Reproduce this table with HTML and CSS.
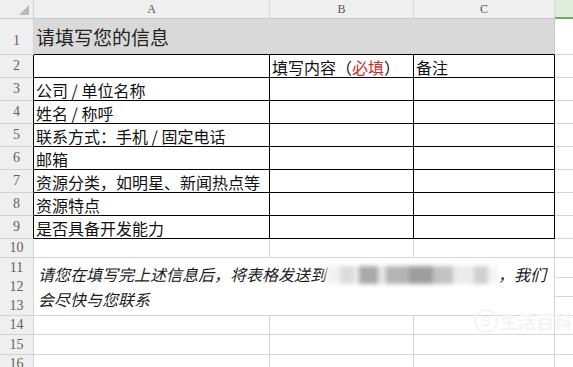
FILE: index.html
```html
<!DOCTYPE html>
<html lang="zh-CN">
<head>
<meta charset="utf-8">
<title>请填写您的信息</title>
<link rel="stylesheet" href="styles.css">
</head>
<body>
<div class="sheet">
  <div class="corner"><svg width="12" height="12" viewBox="0 0 12 12"><polygon points="1,11 11,11 11,1" fill="#b8b8b8"/></svg></div>
  <div class="colh">A</div>
  <div class="colh">B</div>
  <div class="colh">C</div>
  <div class="colh active"></div>

  <div class="rh rh1">1</div>
  <div class="title">请填写您的信息</div>
  <div class="d"></div>

  <div class="rh blk">2</div>
  <div class="c b"></div>
  <div class="c b">填写内容（<span class="red">必填</span>）</div>
  <div class="c b">备注</div>
  <div class="d"></div>

  <div class="rh blk">3</div>
  <div class="c b">公司 / 单位名称</div>
  <div class="c b"></div>
  <div class="c b"></div>
  <div class="d"></div>

  <div class="rh blk">4</div>
  <div class="c b">姓名 / 称呼</div>
  <div class="c b"></div>
  <div class="c b"></div>
  <div class="d"></div>

  <div class="rh blk">5</div>
  <div class="c b">联系方式：手机 / 固定电话</div>
  <div class="c b"></div>
  <div class="c b"></div>
  <div class="d"></div>

  <div class="rh blk">6</div>
  <div class="c b">邮箱</div>
  <div class="c b"></div>
  <div class="c b"></div>
  <div class="d"></div>

  <div class="rh blk">7</div>
  <div class="c b">资源分类，如明星、新闻热点等</div>
  <div class="c b"></div>
  <div class="c b"></div>
  <div class="d"></div>

  <div class="rh blk">8</div>
  <div class="c b">资源特点</div>
  <div class="c b"></div>
  <div class="c b"></div>
  <div class="d"></div>

  <div class="rh blk">9</div>
  <div class="c b">是否具备开发能力</div>
  <div class="c b"></div>
  <div class="c b"></div>
  <div class="d"></div>

  <div class="rh">10</div>
  <div class="c"></div>
  <div class="c"></div>
  <div class="c"></div>
  <div class="d"></div>

  <div class="note">请您在填写完上述信息后，将表格发送到<span class="blur"></span>，我们<br>会尽快与您联系</div>
  <div class="rh nob">11</div>
  <div class="d"></div>
  <div class="rh nob">12</div>
  <div class="d"></div>
  <div class="rh">13</div>
  <div class="d"></div>

  <div class="rh">14</div>
  <div class="c"></div>
  <div class="c"></div>
  <div class="c"></div>
  <div class="d"></div>

  <div class="rh">15</div>
  <div class="c"></div>
  <div class="c"></div>
  <div class="c"></div>
  <div class="d"></div>

  <div class="rh rh16">16</div>
  <div class="c"></div>
  <div class="c"></div>
  <div class="c"></div>
  <div class="d"></div>

  <div class="wm"><span class="wm-s">S</span>生活百科</div>
</div>
</body>
</html>
```
FILE: styles.css
```css
html, body {
  margin: 0;
  padding: 0;
  background: #fff;
  overflow: hidden;
}

.sheet {
  position: relative;
  display: grid;
  grid-template-columns: 34px 236px 144px 141px 1fr;
  grid-template-rows: 19px 36px repeat(8, 23px) 19px 20px 19px 19px 19px 20px 19px;
  width: 573px;
  height: 367px;
  overflow: hidden;
  font-family: "Noto Sans CJK SC", "Noto Sans", sans-serif;
  font-size: 16px;
  color: #111;
}

.sheet > div {
  box-sizing: border-box;
}

.corner {
  background: #efefef;
  border-right: 1px solid #d2d2d2;
  border-bottom: 1px solid #c8c8c8;
  display: flex;
  align-items: flex-end;
  justify-content: flex-end;
  padding: 0 3px 2px 0;
}

.colh {
  background: #efefef;
  border-right: 1px solid #d8d8d8;
  border-bottom: 1px solid #c8c8c8;
  font-family: "Liberation Serif", serif;
  font-size: 12px;
  color: #555;
  display: flex;
  align-items: center;
  justify-content: center;
  padding-top: 1px;
}

.colh.active {
  background: #dfeddb;
  border-bottom: 2px solid #7aa86a;
  border-right: none;
}

.rh {
  background: #efefef;
  border-right: 1px solid #d2d2d2;
  border-bottom: 1px solid #d2d2d2;
  font-family: "Liberation Serif", serif;
  font-size: 14px;
  color: #606060;
  display: flex;
  align-items: center;
  justify-content: center;
}

.rh1 {
  padding-top: 9px;
}

.rh16 {
  align-items: flex-start;
  padding-top: 1px;
}

.rh.blk {
  border-right-color: #000;
}

.rh.nob {
  border-bottom-color: #efefef;
}

.title {
  grid-column: 2 / 5;
  background: #d9d9d9;
  border-right: 1px solid #c8c8c8;
  border-bottom: 1px solid #000;
  font-size: 19px;
  color: #222;
  display: flex;
  align-items: center;
  padding-left: 2px;
}

.c {
  border-right: 1px solid #d6d6d6;
  border-bottom: 1px solid #d6d6d6;
  display: flex;
  align-items: center;
  padding: 1px 0 0 2px;
  white-space: nowrap;
  line-height: 1;
}

.c.b {
  border-right-color: #000;
  border-bottom-color: #000;
}

.red {
  color: #c8302c;
}

.d {
  border-bottom: 1px solid #d6d6d6;
}

.note {
  grid-column: 2 / 5;
  grid-row: 12 / 15;
  border-right: 1px solid #d6d6d6;
  border-bottom: 1px solid #d6d6d6;
  font-style: italic;
  line-height: 25px;
  padding: 4px 0 0 4px;
  color: #1a1a1a;
  white-space: nowrap;
}

.blur {
  display: inline-block;
  width: 172px;
  height: 18px;
  vertical-align: -3px;
  background: linear-gradient(90deg,
    #f2f2f2 0 8%, #dcdcdc 8% 16%, #eeeeee 16% 19%,
    #a9a9a9 19% 30%, #e4e4e4 30% 35%, #b4b4b4 35% 48%,
    #9e9e9e 48% 62%, #c2c2c2 62% 74%, #ebebeb 74% 86%,
    #cfcfcf 86% 94%, #f4f4f4 94%);
  filter: blur(2px);
}

.wm {
  position: absolute;
  left: 474px;
  top: 308px;
  font-size: 18px;
  font-weight: bold;
  color: #f4f4f4;
  display: flex;
  align-items: center;
  gap: 2px;
}

.wm-s {
  display: inline-flex;
  width: 20px;
  height: 20px;
  border: 2px solid #f4f4f4;
  border-radius: 50%;
  align-items: center;
  justify-content: center;
  font-family: "Liberation Sans", sans-serif;
  font-size: 14px;
}
```
